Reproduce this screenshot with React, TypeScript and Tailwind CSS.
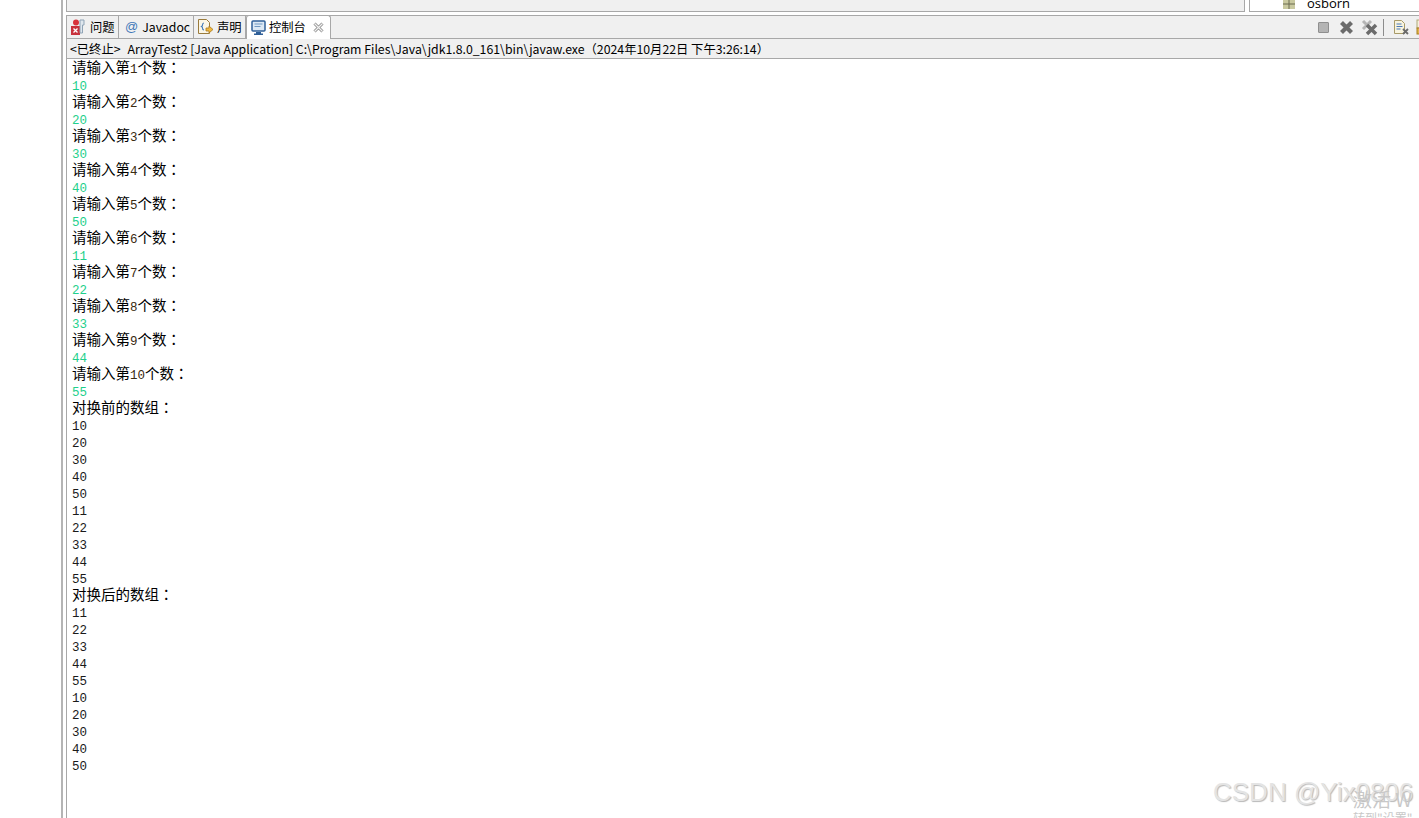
import React from 'react';

const cjk = '"Noto Sans CJK SC", "Noto Sans", sans-serif';

type Line = { text: string; kind: 'prompt' | 'input' | 'output' };

const lines: Line[] = [];
['10', '20', '30', '40', '50', '11', '22', '33', '44', '55'].forEach((v, i) => {
  lines.push({ text: `请输入第|${i + 1}|个数`, kind: 'prompt' });
  lines.push({ text: v, kind: 'input' });
});
lines.push({ text: '对换前的数组', kind: 'prompt' });
['10', '20', '30', '40', '50', '11', '22', '33', '44', '55'].forEach((v) => lines.push({ text: v, kind: 'output' }));
lines.push({ text: '对换后的数组', kind: 'prompt' });
['11', '22', '33', '44', '55', '10', '20', '30', '40', '50'].forEach((v) => lines.push({ text: v, kind: 'output' }));

const ConsoleLine = ({ line }: { line: Line }) => {
  if (line.kind === 'prompt') {
    const parts = line.text.split('|');
    return (
      <div className="h-[17px] leading-[15px] text-[14.5px] text-black whitespace-nowrap">
        {parts[0]}
        {parts[1] && <span className="font-['Liberation_Mono'] text-[12.5px] text-[#3a2a10]">{parts[1]}</span>}
        {parts[2]}
        {/* centred colon, as in the original console font */}
        <span className="font-['Noto_Sans_CJK_TC']">：</span>
      </div>
    );
  }
  return (
    <div
      className={`h-[17px] pt-[6px] leading-[11px] font-['Liberation_Mono'] text-[12.5px] ${
        line.kind === 'input' ? 'text-[#1fd08c]' : 'text-[#1a1a1a]'
      }`}
    >
      {line.text}
    </div>
  );
};

const ProblemsIcon = () => (
  <svg width="16" height="18" viewBox="0 0 16 18">
    <rect x="1" y="8" width="9" height="9" fill="#c8323c" />
    <path d="M3.500 10.500l4 4m0-4l-4 4" stroke="#fff" strokeWidth="1.300" />
    <circle cx="6" cy="4.500" r="3" fill="#d8343c" />
    <path d="M10 2h4v5h-1.500v8H10z" fill="#dfe7ee" stroke="#8fa3b5" strokeWidth="1" />
  </svg>
);

const DeclarationIcon = () => (
  <svg width="17" height="18" viewBox="0 0 17 18">
    <path d="M1.500 1.500h8l3 3v11h-11z" fill="#fbf6e6" stroke="#9a7b3c" />
    <path d="M7 5c-1.500 0-1.500 1-1.500 2s-1 1.500-1 1.500 1 .5 1 1.500 0 2 1.500 2" fill="none" stroke="#3f78b8" strokeWidth="1.100" />
    <path d="M9 10h3V8l4 3.500-4 3.500v-2H9z" fill="#f0b840" stroke="#a87a20" strokeWidth=".8" />
  </svg>
);

const ConsoleIcon = () => (
  <svg width="15" height="15" viewBox="0 0 15 15">
    <rect x="1" y="1" width="13" height="10" rx="1" fill="#dce8f4" stroke="#2f5f98" strokeWidth="1.500" />
    <path d="M3.500 4h8M3.500 6.500h6" stroke="#6f97c2" />
    <path d="M5 12h5v1.500H5zM3 13.500h9V15H3z" fill="#2f5f98" />
  </svg>
);

const CloseIcon = () => (
  <svg width="11" height="11" viewBox="0 0 11 11">
    <path d="M1.500 1.500l8 8m0-8l-8 8" stroke="#8c8c8c" strokeWidth="3" />
    <path d="M1.500 1.500l8 8m0-8l-8 8" stroke="#f2f2f2" strokeWidth="1.200" />
  </svg>
);

const Tab = ({ icon, label, active, width, gap }: { icon: React.ReactNode; label: string; active?: boolean; width: string; gap: string }) => (
  <div
    className={`flex items-center border-r border-[#a8a8a8] ${width} ${gap} ${
      active ? '-mb-px -mt-px rounded-t-[3px] border-l border-t bg-white pl-[4px]' : 'bg-[#f0f0f0] pl-[3px]'
    } text-[12.300px] text-black`}
  >
    {icon}
    <span className="whitespace-nowrap">{label}</span>
    {active && (
      <span className="ml-[4px]">
        <CloseIcon />
      </span>
    )}
  </div>
);

const ToolbarIcons = () => (
  <div className="ml-auto flex items-center self-center">
    <span className="h-[11px] w-[11px] rounded-[1px] border border-[#8f8f8f] bg-[#b4b4b4]" />
    <svg width="15" height="15" viewBox="0 0 15 15" className="ml-[10px]">
      <path d="M2.500 2.500l10 10m0-10l-10 10" stroke="#6b6b6b" strokeWidth="4.200" />
    </svg>
    <svg width="17" height="17" viewBox="0 0 17 17" className="ml-[7px]">
      <path d="M2 2l8 8m0-8l-8 8" stroke="#b5b5b5" strokeWidth="3" />
      <path d="M6 6l9 9m0-9l-9 9" stroke="#6b6b6b" strokeWidth="3.500" />
    </svg>
    <span className="ml-[5px] h-[17px] w-px bg-[#8c8c8c]" />
    <svg width="16" height="16" viewBox="0 0 16 16" className="ml-[9px]">
      <path d="M1.500 1.500h7l3 3v10h-10z" fill="#f8f4df" stroke="#a89a68" />
      <path d="M3.500 5h5M3.500 7.500h6M3.500 10h4" stroke="#4a78b8" />
      <path d="M10 10l5 5m0-5l-5 5" stroke="#6b6b6b" strokeWidth="1.800" />
    </svg>
    <svg width="3" height="16" viewBox="0 0 3 16" className="ml-[7px]">
      <rect x="1" y="1" width="12" height="8" fill="#f4f0dc" stroke="#b0a878" />
      <rect x="1" y="9" width="10" height="6" fill="#e2b64c" stroke="#a87f20" />
    </svg>
  </div>
);

export default function App() {
  return (
    <div className="relative flex h-[818px] w-[1419px] overflow-hidden bg-white" style={{ fontFamily: cjk }}>
      <div className="w-[61px] shrink-0" />
      <div className="w-[2px] shrink-0 bg-[#b4b4b4]" />
      <div className="flex min-w-0 flex-1 flex-col pl-[3px]">
        {/* top panels, cut off by the screenshot */}
        <div className="flex h-[15px] shrink-0">
          <div className="h-[12px] w-[1179px] shrink-0 border-x border-b border-[#a8a8a8] bg-[#f0f0f0]" />
          <div className="ml-[4px] flex h-[12px] flex-1 border-l border-b border-[#a8a8a8] bg-white pl-[33px]">
            <svg width="12" height="9" viewBox="0 0 12 9">
              <path d="M0 0h12v9H0z" fill="#c9c9a0" />
              <path d="M6 0v9M0 4h12" stroke="#6a6a50" />
            </svg>
            <span className="ml-[12px] -mt-[4px] text-[13px] leading-[14px] font-['Open_Sans'] text-black">osborn</span>
          </div>
        </div>

        <div className="flex min-h-0 flex-1 flex-col border-l border-[#a8a8a8]">
          {/* tabs */}
          <div className="flex h-[24px] shrink-0 items-stretch border-y border-[#a8a8a8] bg-[#f0f0f0]">
            <Tab icon={<ProblemsIcon />} label="问题" width="w-[52px]" gap="gap-[4px]" />
            <Tab icon={<span className="ml-[3px] text-[#3f78b8] font-['Liberation_Sans'] text-[13px]">@</span>} label="Javadoc" width="w-[75px]" gap="gap-[4px]" />
            <Tab icon={<DeclarationIcon />} label="声明" width="w-[52px]" gap="gap-[3px]" />
            <Tab icon={<ConsoleIcon />} label="控制台" active width="w-[85px]" gap="gap-[3px]" />
            <ToolbarIcons />
          </div>

          {/* console title */}
          <div className="flex h-[20px] shrink-0 items-center border-b border-[#a8a8a8] bg-[#f0f0f0] pl-[3px] pt-[1px] text-[12.300px] text-black whitespace-pre">
            <span className="mr-[7px]">&lt;已终止&gt;</span>
            <span>ArrayTest2 [Java Application] C:\Program Files\Java\jdk1.8.0_161\bin\javaw.exe（2024年10月22日 下午3:26:14）</span>
          </div>

          {/* output */}
          <div className="flex-1 pl-[5px]">
            {lines.map((line, i) => (
              <ConsoleLine key={i} line={line} />
            ))}
          </div>
        </div>
      </div>

      {/* watermark */}
      <div className="absolute left-[1213px] top-[774px] whitespace-nowrap font-['Liberation_Sans'] text-[26px] leading-[36px] text-[#e4e4e4] [text-shadow:1px_1px_1px_#b8b8b8]">
        CSDN @Yix0806
      </div>
      <div className="absolute left-[1353px] top-[786px] whitespace-nowrap text-[19px] leading-[26px] text-[#c8c8c8]">激活 W</div>
      <div className="absolute left-[1353px] top-[811px] whitespace-nowrap text-[12px] leading-[14px] text-[#c8c8c8]">转到"设置"</div>
    </div>
  );
}
